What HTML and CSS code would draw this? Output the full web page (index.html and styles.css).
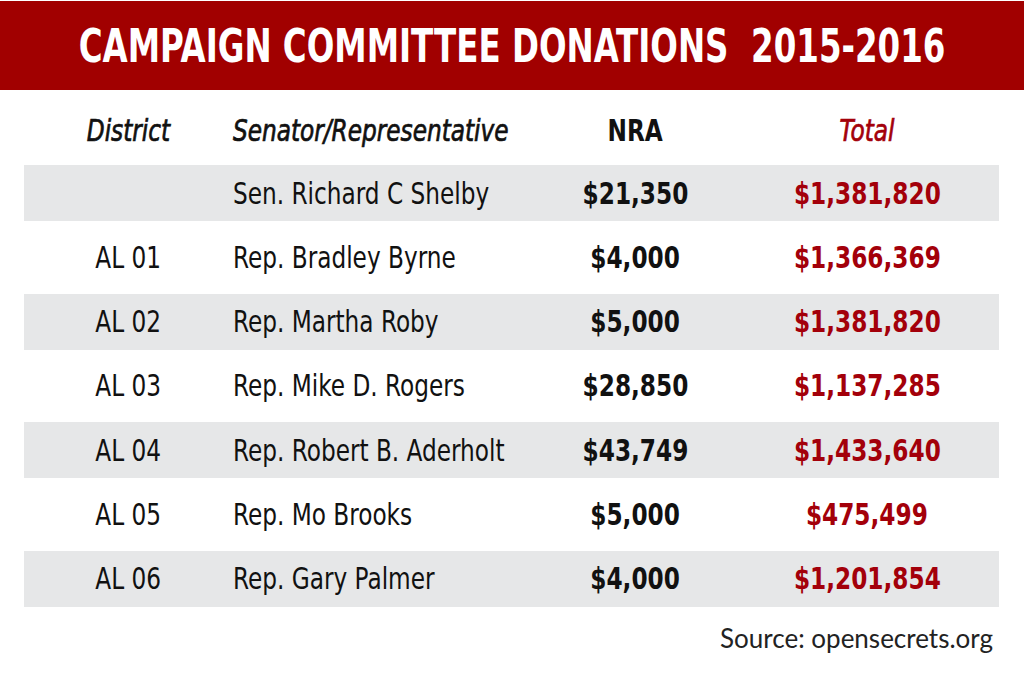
FILE: index.html
```html
<!DOCTYPE html>
<html>
<head>
<meta charset="utf-8">
<link rel="stylesheet" href="styles.css">
</head>
<body>
<div class="page">
  <header class="banner"><h1 class="title">CAMPAIGN COMMITTEE DONATIONS&nbsp; 2015-2016</h1></header>
  <div class="table">
    <div class="row head">
      <div class="cell dist"><span class="t">District</span></div>
      <div class="cell name"><span class="t">Senator/Representative</span></div>
      <div class="cell nra"><span class="t">NRA</span></div>
      <div class="cell total"><span class="t">Total</span></div>
    </div>
    <div class="row shaded">
      <div class="cell dist"></div>
      <div class="cell name"><span class="t">Sen. Richard C Shelby</span></div>
      <div class="cell nra"><span class="t">$21,350</span></div>
      <div class="cell total"><span class="t">$1,381,820</span></div>
    </div>
    <div class="row">
      <div class="cell dist"><span class="t">AL 01</span></div>
      <div class="cell name"><span class="t">Rep. Bradley Byrne</span></div>
      <div class="cell nra"><span class="t">$4,000</span></div>
      <div class="cell total"><span class="t">$1,366,369</span></div>
    </div>
    <div class="row shaded">
      <div class="cell dist"><span class="t">AL 02</span></div>
      <div class="cell name"><span class="t">Rep. Martha Roby</span></div>
      <div class="cell nra"><span class="t">$5,000</span></div>
      <div class="cell total"><span class="t">$1,381,820</span></div>
    </div>
    <div class="row">
      <div class="cell dist"><span class="t">AL 03</span></div>
      <div class="cell name"><span class="t">Rep. Mike D. Rogers</span></div>
      <div class="cell nra"><span class="t">$28,850</span></div>
      <div class="cell total"><span class="t">$1,137,285</span></div>
    </div>
    <div class="row shaded">
      <div class="cell dist"><span class="t">AL 04</span></div>
      <div class="cell name"><span class="t">Rep. Robert B. Aderholt</span></div>
      <div class="cell nra"><span class="t">$43,749</span></div>
      <div class="cell total"><span class="t">$1,433,640</span></div>
    </div>
    <div class="row">
      <div class="cell dist"><span class="t">AL 05</span></div>
      <div class="cell name"><span class="t">Rep. Mo Brooks</span></div>
      <div class="cell nra"><span class="t">$5,000</span></div>
      <div class="cell total"><span class="t">$475,499</span></div>
    </div>
    <div class="row shaded">
      <div class="cell dist"><span class="t">AL 06</span></div>
      <div class="cell name"><span class="t">Rep. Gary Palmer</span></div>
      <div class="cell nra"><span class="t">$4,000</span></div>
      <div class="cell total"><span class="t">$1,201,854</span></div>
    </div>
  </div>
  <p class="source">Source: opensecrets.org</p>
</div>
</body>
</html>
```

FILE: styles.css
```css
* { box-sizing: border-box; }
html, body { margin: 0; padding: 0; background: #fff; }
body {
  width: 1024px;
  height: 679px;
  overflow: hidden;
  font-family: "DejaVu Sans Condensed", "DejaVu Sans", sans-serif;
  color: #111;
}
.page { padding-top: 1px; }
.banner {
  height: 89px;
  background: #a10000;
  display: flex;
  align-items: center;
  justify-content: center;
  overflow: hidden;
}
.title {
  margin: 0;
  flex: none;
  color: #fff;
  font-size: 46px;
  font-weight: 700;
  white-space: nowrap;
  transform: scaleX(0.785);
  transform-origin: center;
}
.table {
  margin-left: 24px;
  width: 975px;
}
.row {
  display: grid;
  grid-template-columns: 209px 302px 200px 264px;
  align-items: center;
  height: 72.5px;
  font-size: 30px;
}
.row.head { height: 75px; padding-top: 5px; }
.row.shaded { background: #e6e7e8; height: 56px; }
.cell { white-space: nowrap; }
.t { display: inline-block; transform: scaleX(0.86); transform-origin: center; }
.dist { text-align: center; }
.name { text-align: left; }
.name .t { transform-origin: left center; }
.nra { text-align: center; font-weight: 700; }
.total { text-align: center; font-weight: 700; color: #a3000a; }
.head .dist, .head .name, .head .total {
  font-style: italic;
  font-weight: 400;
  -webkit-text-stroke: 0.7px currentColor;
}
.source {
  margin: 15px 31px 0 0;
  text-align: right;
  font-family: "Lato", "Liberation Sans", sans-serif;
  font-size: 26px;
  color: #222;
}
```
